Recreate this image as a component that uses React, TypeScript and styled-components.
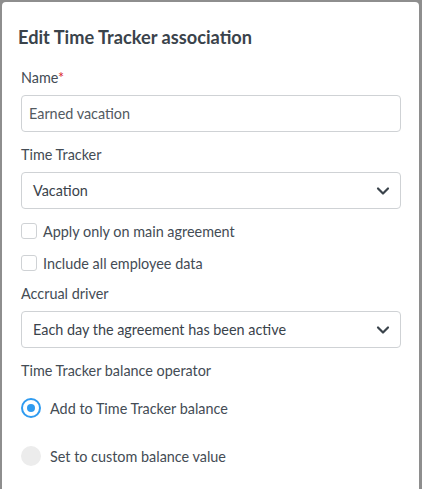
import React from "react";
import styled, { createGlobalStyle } from "styled-components";

const GlobalStyle = createGlobalStyle`
  html, body {
    margin: 0;
    padding: 0;
    background: #8e8e8e;
  }
  body {
    font-family: "Lato", "Noto Sans", sans-serif;
    color: #3c454e;
  }
`;

const Dialog = styled.div`
  margin: 2px 3px 0 2px;
  background: #fff;
  border-radius: 4px 4px 0 0;
  padding: 23px 18px 40px 19px;
  min-height: 480px;
  box-sizing: border-box;
`;

const Title = styled.h2`
  margin: 0 0 19px -3px;
  font-size: 18.2px;
  line-height: 24px;
  font-weight: 700;
  color: #3a434b;
`;

const Label = styled.div<{ $gap?: number }>`
  font-size: 14.4px;
  line-height: 20px;
  margin-top: ${(p) => p.$gap ?? 0}px;
  margin-bottom: 7px;
  color: #444c55;
`;

const Required = styled.span`
  color: #d9262c;
`;

const Field = styled.div`
  height: 37px;
  box-sizing: border-box;
  border: 1px solid #cfd2d5;
  border-radius: 4px;
  display: flex;
  align-items: center;
  font-size: 14.4px;
  color: #444c55;
`;

const TextInput = styled(Field)`
  padding-left: 7px;
  color: #535a61;
`;

const Select = styled(Field)`
  padding: 0 10px 0 11px;
  justify-content: space-between;
  color: #3a434b;
`;

const CheckRow = styled.label`
  display: flex;
  align-items: center;
  gap: 6px;
  height: 20px;
  margin-top: 12px;
  font-size: 14.4px;
  color: #444c55;
`;

const Box = styled.span`
  width: 16px;
  height: 16px;
  box-sizing: border-box;
  border: 1px solid #cfd2d5;
  border-radius: 3px;
`;

const RadioRow = styled.label<{ $gap: number }>`
  display: flex;
  align-items: center;
  gap: 9px;
  height: 24px;
  margin-top: ${(p) => p.$gap}px;
  font-size: 14.4px;
  color: #444c55;
`;

const Radio = styled.span<{ $on?: boolean }>`
  width: 20px;
  height: 20px;
  border-radius: 50%;
  box-sizing: border-box;
  display: flex;
  align-items: center;
  justify-content: center;
  background: ${(p) => (p.$on ? "#fff" : "#ececec")};
  border: ${(p) => (p.$on ? "2px solid #2f9bf0" : "none")};
  &::after {
    content: "";
    display: ${(p) => (p.$on ? "block" : "none")};
    width: 8px;
    height: 8px;
    border-radius: 50%;
    background: #2f9bf0;
  }
`;

const Chevron = () => (
  <svg width="14" height="10" viewBox="0 0 14 10">
    <path d="M2 2.5 L7 7.5 L12 2.5" fill="none" stroke="#3a434b" strokeWidth="2.2" strokeLinecap="round" strokeLinejoin="round" />
  </svg>
);

const App: React.FC = () => (
  <>
    <GlobalStyle />
    <Dialog>
      <Title>Edit Time Tracker association</Title>
      <Label>
        Name<Required>*</Required>
      </Label>
      <TextInput>Earned vacation</TextInput>
      <Label $gap={13}>Time Tracker</Label>
      <Select>
        Vacation
        <Chevron />
      </Select>
      <CheckRow>
        <Box />
        Apply only on main agreement
      </CheckRow>
      <CheckRow>
        <Box />
        Include all employee data
      </CheckRow>
      <Label $gap={11}>Accrual driver</Label>
      <Select>
        Each day the agreement has been active
        <Chevron />
      </Select>
      <Label $gap={13}>Time Tracker balance operator</Label>
      <RadioRow $gap={15}>
        <Radio $on />
        Add to Time Tracker balance
      </RadioRow>
      <RadioRow $gap={24}>
        <Radio />
        Set to custom balance value
      </RadioRow>
    </Dialog>
  </>
);

export default App;
